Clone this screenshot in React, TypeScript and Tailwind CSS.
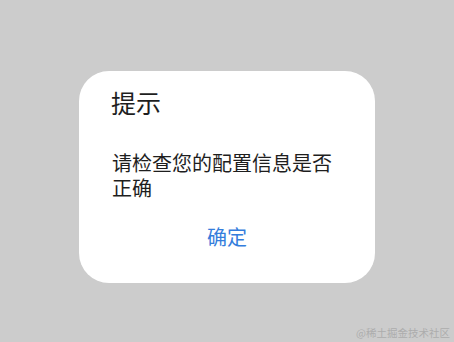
export default function App() {
  return (
    <div
      className="relative w-[454px] h-[342px] bg-[#cccccc] overflow-hidden"
      style={{ fontFamily: '"Noto Sans CJK SC", "Noto Sans", sans-serif' }}
    >
      <div className="flex justify-center pt-[71px]">
        <div className="w-[296px] h-[212px] bg-white rounded-[30px] flex flex-col">
          <div className="pt-[15px] pl-[32px] text-[25px] leading-[32px] text-[#1e1e1e]">提示</div>
          <div className="mt-[32px] px-[33px] text-[20px] leading-[25px] text-[#1e1e1e]">
            请检查您的配置信息是否正确
          </div>
          <div className="mt-[24px] text-center text-[20px] leading-[25px] text-[#347ddc]">确定</div>
        </div>
      </div>
      <div className="absolute right-[4px] bottom-[3px] text-[10.5px] leading-[12px] text-[#adadad]">
        @稀土掘金技术社区
      </div>
    </div>
  );
}
